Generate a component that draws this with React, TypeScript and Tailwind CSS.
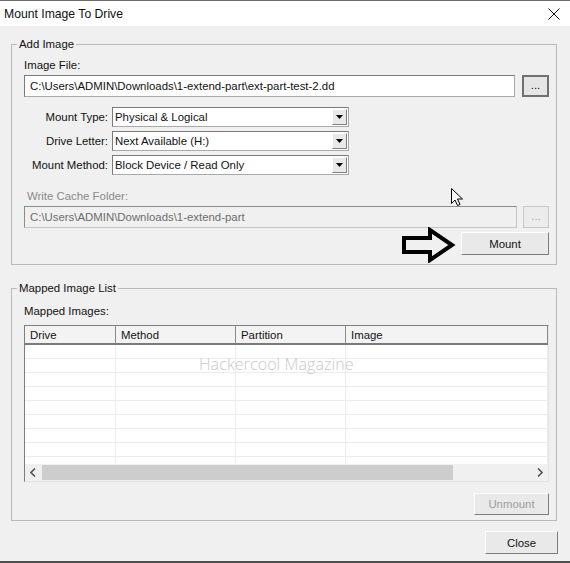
import React from 'react';

const sunken = "border border-[#a9a9a9] border-t-[#7a7a7a] border-l-[#7a7a7a]";
const raised = "border border-[#fdfdfd] border-b-[#7e7e7e] border-r-[#7e7e7e] bg-[#e9e9e9]";

function Combo({ label, value }: { label: string; value: string }) {
  return (
    <div className="flex items-center gap-[4px] h-[20px]">
      <span className="w-[84px] text-right whitespace-nowrap">{label}</span>
      <div className={`w-[237px] h-[20px] bg-white flex items-center ${sunken}`}>
        <span className="flex-1 pl-[2px] leading-[14px]">{value}</span>
        <div className={`w-[15px] h-[16px] mr-[1px] flex items-center justify-center ${raised}`}>
          <svg width="7" height="4" viewBox="0 0 7 4">
            <polygon points="0,0 7,0 3.5,4" fill="#000" />
          </svg>
        </div>
      </div>
    </div>
  );
}

export default function App() {
  const columns = [
    { name: "Drive", w: "w-[91px]" },
    { name: "Method", w: "w-[120px]" },
    { name: "Partition", w: "w-[110px]" },
    { name: "Image", w: "flex-1" },
  ];
  const rows = Array.from({ length: 9 });

  return (
    <div className="relative w-[570px] h-[563px] bg-[#f0f0f0] font-['Liberation_Sans',Arial,sans-serif] text-[11.4px] leading-[14px] text-[#111] flex flex-col border-t border-[#6b6b6b] border-b-2 border-b-[#4f4f4f] overflow-hidden">
      {/* title bar */}
      <div className="h-[25px] shrink-0 bg-white flex items-center justify-between pl-[4px] pr-[10px]">
        <span className="text-[12.2px]">Mount Image To Drive</span>
        <svg width="12" height="12" viewBox="0 0 12 12">
          <path d="M0.5 0.5 L11.5 11.5 M11.5 0.5 L0.5 11.5" stroke="#111" strokeWidth="1" />
        </svg>
      </div>

      <div className="flex flex-col pl-[11px] pr-[13px]">
        {/* Add Image */}
        <fieldset className="mt-[11px] border border-[#b9b9b9] pl-[12px] pr-[7px] pt-[7px] pb-[9px]">
          <legend className="-ml-[7px] px-[2px] leading-[14px]">Add Image</legend>
          <div>Image File:</div>
          <div className="mt-[3px] flex gap-[7px] h-[22px]">
            <div className={`flex-1 bg-white flex items-center pl-[5px] ${sunken}`}>
              C:\Users\ADMIN\Downloads\1-extend-part\ext-part-test-2.dd
            </div>
            <div className="w-[27px] border-2 border-[#707070] bg-[#e5e5e5] flex items-center justify-center pb-[3px]">...</div>
          </div>

          <div className="mt-[10px] flex flex-col gap-[4px]">
            <Combo label="Mount Type:" value="Physical & Logical" />
            <Combo label="Drive Letter:" value="Next Available (H:)" />
            <Combo label="Mount Method:" value="Block Device / Read Only" />
          </div>

          <div className="mt-[14px] pl-[3px] text-[#8a8a8a]">Write Cache Folder:</div>
          <div className="mt-[3px] flex gap-[6px] h-[22px]">
            <div className="flex-1 bg-[#f0f0f0] border border-[#c4c4c4] border-t-[#8c8c8c] border-l-[#8c8c8c] flex items-center pl-[5px] text-[#6d6d6d]">
              C:\Users\ADMIN\Downloads\1-extend-part
            </div>
            <div className="w-[26px] border border-[#c8c8c8] bg-[#ececec] text-[#a8a8a8] flex items-center justify-center pb-[3px]">...</div>
          </div>

          <div className="mt-[4px] h-[23px] flex items-center justify-end gap-[5px]">
            <svg width="54" height="36" viewBox="0 0 54 36" className="mt-[3px]">
              <polygon points="2,11 28,11 28,3 50,18 28,33 28,25 2,25" fill="none" stroke="#000" strokeWidth="4" strokeLinejoin="miter" />
            </svg>
            <div className={`w-[88px] h-[23px] flex items-center justify-center ${raised}`}>Mount</div>
          </div>
        </fieldset>

        {/* Mapped Image List */}
        <fieldset className="mt-[16px] border border-[#b9b9b9] pl-[12px] pr-[7px] pt-[9px] pb-[5px]">
          <legend className="-ml-[7px] px-[2px] leading-[14px]">Mapped Image List</legend>
          <div>Mapped Images:</div>
          <div className="relative mt-[7px] h-[157px] bg-white border border-[#e4e4e4] border-t-[#7d7d7d] border-l-[#7d7d7d] flex flex-col overflow-hidden">
            <div className="h-[19px] shrink-0 flex bg-[#f3f3f3] border-b-2 border-[#7a7a7a]">
              {columns.map((c) => (
                <div key={c.name} className={`${c.w} border-r border-[#8a8a8a] pl-[5px] flex items-center`}>
                  {c.name}
                </div>
              ))}
            </div>
            <div className="flex-1 flex flex-col overflow-hidden">
              {rows.map((_, i) => (
                <div key={i} className="h-[14px] shrink-0 flex border-b border-[#ececec]">
                  {columns.map((c) => (
                    <div key={c.name} className={`${c.w} border-r border-[#ededed]`} />
                  ))}
                </div>
              ))}
            </div>
            <div className="h-[17px] shrink-0 flex items-center bg-[#f0f0f0]">
              <div className="w-[16px] flex justify-center">
                <svg width="6" height="9" viewBox="0 0 6 9">
                  <path d="M5 0.5 L1 4.5 L5 8.5" fill="none" stroke="#555" strokeWidth="1.6" />
                </svg>
              </div>
              <div className="ml-[1px] w-[411px] h-[15px] bg-[#cdcdcd]" />
              <div className="flex-1" />
              <div className="w-[16px] flex justify-center">
                <svg width="6" height="9" viewBox="0 0 6 9">
                  <path d="M1 0.5 L5 4.5 L1 8.5" fill="none" stroke="#555" strokeWidth="1.6" />
                </svg>
              </div>
            </div>
            <div className="absolute left-[174px] top-[29px] text-[16px] leading-[18px] text-[#c9c9c9] font-['Open_Sans',sans-serif] font-light tracking-[0.1px]">
              Hackercool Magazine
            </div>
          </div>
          <div className="mt-[11px] flex justify-end">
            <div className={`w-[75px] h-[22px] flex items-center justify-center text-[#a0a0a0] ${raised}`}>Unmount</div>
          </div>
        </fieldset>

        <div className="mt-[10px] flex justify-end -mr-[1px]">
          <div className={`w-[73px] h-[23px] flex items-center justify-center ${raised}`}>Close</div>
        </div>
      </div>

      {/* mouse pointer */}
      <svg width="13" height="19" viewBox="0 0 13 19" className="absolute left-[451px] top-[187px]">
        <path d="M0.5 0.5 L0.5 15.5 L4 12 L6.5 17.5 L9 16.5 L6.5 11 L11.5 11 Z" fill="#fff" stroke="#000" strokeWidth="1" strokeLinejoin="round" />
      </svg>
    </div>
  );
}
